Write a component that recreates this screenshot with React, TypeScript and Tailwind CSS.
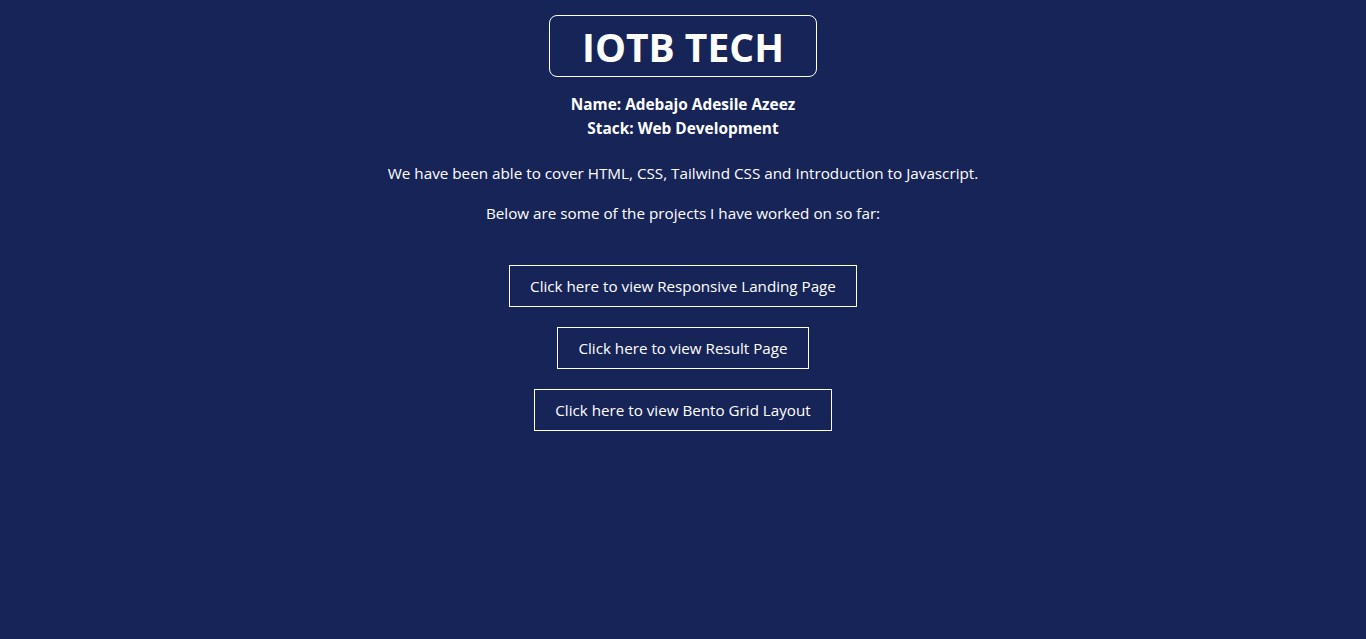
const projects = [
  "Click here to view Responsive Landing Page",
  "Click here to view Result Page",
  "Click here to view Bento Grid Layout",
];

export default function App() {
  return (
    <div
      className="min-h-screen bg-[#172457] text-white flex flex-col items-center pt-[15px]"
      style={{ fontFamily: '"Open Sans", "Noto Sans", sans-serif' }}
    >
      <div className="border border-white rounded-lg w-[268px] h-[62px] flex items-center justify-center">
        <h1 className="text-[39px] font-bold leading-none">IOTB TECH</h1>
      </div>

      <div className="mt-[16px] text-center font-bold text-[15.4px] leading-6">
        <p>Name: Adebajo Adesile Azeez</p>
        <p>Stack: Web Development</p>
      </div>

      <p className="mt-[20px] text-[15.25px] leading-6">
        We have been able to cover HTML, CSS, Tailwind CSS and Introduction to Javascript.
      </p>
      <p className="mt-[16px] text-[15.25px] leading-6">Below are some of the projects I have worked on so far:</p>

      <div className="mt-[40px] flex flex-col items-center gap-5">
        {projects.map((label) => (
          <a
            key={label}
            href="#"
            className="border border-white h-[42px] px-5 flex items-center text-[15.2px]"
          >
            {label}
          </a>
        ))}
      </div>
    </div>
  );
}
